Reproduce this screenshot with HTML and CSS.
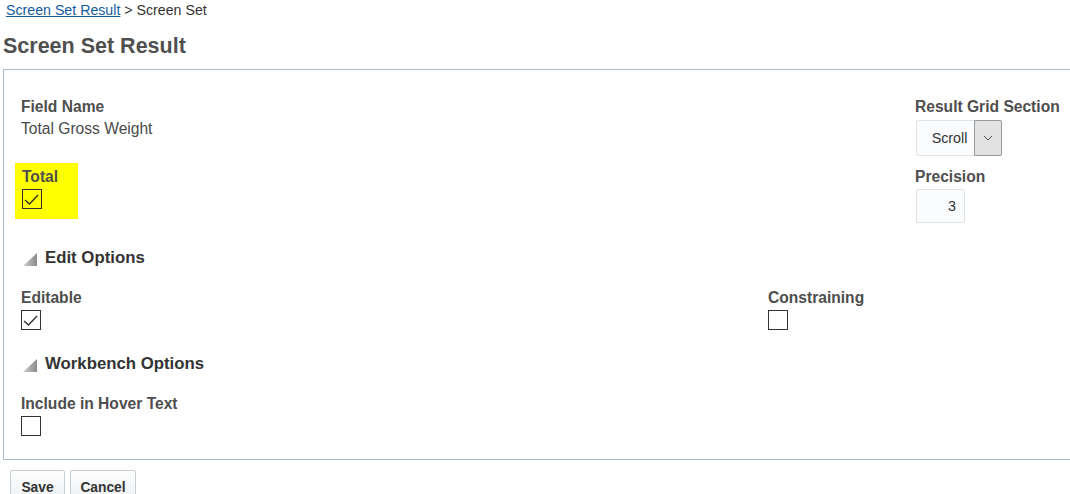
FILE: index.html
```html
<!DOCTYPE html>
<html>
<head>
<meta charset="utf-8">
<link rel="stylesheet" href="styles.css">
</head>
<body>
<nav class="crumbs"><a href="#" class="crumb-link">Screen Set Result</a> &gt; Screen Set</nav>
<h1 class="title">Screen Set Result</h1>
<section class="panel">
  <div class="top-row">
    <div class="left-col">
      <div class="field">
        <div class="label">Field Name</div>
        <div class="value">Total Gross Weight</div>
      </div>
      <div class="highlight">
        <div class="label">Total</div>
        <span class="checkbox"><svg width="18" height="18" viewBox="0 0 18 18"><polyline points="2,10 6.5,14 15,5" fill="none" stroke="#333" stroke-width="1.4"/></svg></span>
      </div>
    </div>
    <div class="right-col">
      <div class="label">Result Grid Section</div>
      <div class="select">
        <span class="select-text">Scroll</span>
        <span class="select-btn"><svg width="10" height="6" viewBox="0 0 10 6"><polyline points="1,1 5,5 9,1" fill="none" stroke="#555" stroke-width="1"/></svg></span>
      </div>
      <div class="label label-gap">Precision</div>
      <div class="num-input">3</div>
    </div>
  </div>

  <div class="section-head">
    <svg class="tri" width="14" height="13" viewBox="0 0 14 13"><defs><linearGradient id="g1" x1="0" x2="1" y1="0" y2="0"><stop offset="0" stop-color="#d0d0d0"/><stop offset="1" stop-color="#8a8a8a"/></linearGradient></defs><polygon points="14,0 14,13 0,13" fill="url(#g1)"/></svg>
    <span class="head-text">Edit Options</span>
  </div>
  <div class="two-col">
    <div class="check-field">
      <div class="label">Editable</div>
      <span class="checkbox"><svg width="18" height="18" viewBox="0 0 18 18"><polyline points="2,10 6.5,14 15,5" fill="none" stroke="#333" stroke-width="1.4"/></svg></span>
    </div>
    <div class="check-field">
      <div class="label">Constraining</div>
      <span class="checkbox"></span>
    </div>
  </div>

  <div class="section-head section-head2">
    <svg class="tri" width="14" height="13" viewBox="0 0 14 13"><defs><linearGradient id="g2" x1="0" x2="1" y1="0" y2="0"><stop offset="0" stop-color="#d0d0d0"/><stop offset="1" stop-color="#8a8a8a"/></linearGradient></defs><polygon points="14,0 14,13 0,13" fill="url(#g2)"/></svg>
    <span class="head-text">Workbench Options</span>
  </div>
  <div class="check-field single">
    <div class="label">Include in Hover Text</div>
    <span class="checkbox"></span>
  </div>
</section>
<div class="buttons">
  <button class="btn btn-save">Save</button>
  <button class="btn btn-cancel">Cancel</button>
</div>
</body>
</html>
```

FILE: styles.css
```css
html, body {
  margin: 0;
  padding: 0;
  overflow: hidden;
  background: #fff;
  font-family: "Liberation Sans", Arial, sans-serif;
}

.crumbs {
  padding: 2px 6px 0;
  font-size: 14.2px;
  line-height: 17px;
  color: #333;
}

.crumb-link {
  color: #145b9e;
  text-decoration: underline;
}

.title {
  margin: 14px 0 0 3px;
  font-size: 21.5px;
  line-height: 26px;
  font-weight: bold;
  color: #4f4f4f;
}

.panel {
  margin: 10px 0 0 3px;
  border: 1px solid #a9bacd;
  border-right: none;
  padding: 28px 0 23px 17px;
}

.top-row {
  display: flex;
  justify-content: space-between;
}

.label {
  height: 16px;
  font-size: 15.6px;
  line-height: 18px;
  font-weight: bold;
  color: #4e4e4e;
  white-space: nowrap;
}

.value {
  margin-top: 6px;
  height: 16px;
  font-size: 15.6px;
  line-height: 18px;
  color: #4a4a4a;
  white-space: nowrap;
}

.highlight {
  margin: 27px 0 0 -6px;
  width: 63px;
  box-sizing: border-box;
  padding: 5px 7px 10px;
  background: #ffff00;
}

.checkbox {
  display: flex;
  align-items: center;
  justify-content: center;
  margin-top: 5px;
  width: 20px;
  height: 20px;
  box-sizing: border-box;
  border: 1px solid #333;
  background: transparent;
}

.right-col {
  width: 155px;
}

.select {
  display: flex;
  margin: 6px 0 0 1px;
  width: 86px;
  height: 36px;
  box-sizing: border-box;
  border: 1px solid #dfe4e9;
  border-radius: 2px;
  background: #fbfcfd;
}

.select-text {
  flex: 1;
  display: flex;
  align-items: center;
  justify-content: center;
  padding-left: 8px;
  font-size: 14.3px;
  color: #333;
}

.select-btn {
  display: flex;
  align-items: center;
  justify-content: center;
  width: 26px;
  margin: -1px -1px -1px 0;
  border: 1px solid #9a9a9a;
  background: #e2e2e2;
  border-radius: 0 2px 2px 0;
}

.label-gap {
  margin-top: 12px;
}

.num-input {
  display: flex;
  align-items: center;
  justify-content: flex-end;
  margin: 5px 0 0 1px;
  width: 49px;
  height: 34px;
  box-sizing: border-box;
  padding-right: 8px;
  border: 1px solid #dfe4e9;
  border-radius: 2px;
  background: #fbfcfd;
  font-size: 14.3px;
  color: #333;
}

.section-head {
  display: flex;
  align-items: center;
  gap: 8px;
  margin-top: 24px;
  height: 20px;
  padding-left: 2px;
  font-size: 16.8px;
  font-weight: bold;
  color: #333;
}

.head-text {
  line-height: 22px;
  margin-bottom: -2px;
}

.section-head2 {
  margin-top: 23px;
}

.tri {
  display: block;
  margin-top: 4px;
}

.two-col {
  display: grid;
  grid-template-columns: 747px 1fr;
  margin-top: 22px;
}

.single {
  margin-top: 22px;
}

.buttons {
  display: flex;
  gap: 5px;
  margin: 10px 0 0 10px;
}

.btn {
  height: 30px;
  box-sizing: border-box;
  padding: 0;
  border: 1px solid #c6ced6;
  border-radius: 2px;
  background: linear-gradient(#fdfdfd, #eef1f4);
  font-family: "Liberation Sans", Arial, sans-serif;
  font-size: 13.8px;
  font-weight: bold;
  color: #333;
  line-height: 28px;
  padding-top: 3px;
}

.btn-save {
  width: 55px;
}

.btn-cancel {
  width: 66px;
}
```
